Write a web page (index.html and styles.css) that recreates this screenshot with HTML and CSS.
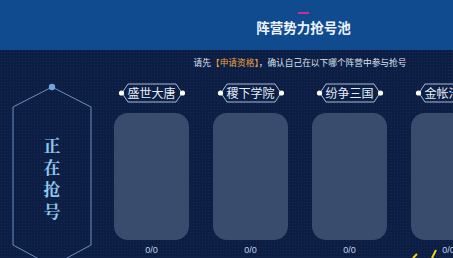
FILE: index.html
```html
<!DOCTYPE html>
<html>
<head>
<meta charset="UTF-8">
<title>阵营势力抢号池</title>
<link rel="stylesheet" href="styles.css">
</head>
<body>
<div class="page">
  <div class="banner">
    <div class="banner-line"></div>
    <div class="banner-title">阵营势力抢号池</div>
  </div>

  <div class="notice">请先<span class="notice-hl">【申请资格】</span>，确认自己在以下哪个阵营中参与抢号</div>

  <div class="main">
    <div class="status">
      <svg class="status-frame" width="80" height="190" viewBox="0 0 80 190">
        <polyline points="40,4 1,24 1,162 40,183" fill="none" stroke="#6f8fbf" stroke-width="1"/>
        <polyline points="40,4 79,24 79,162 40,183" fill="none" stroke="#6f8fbf" stroke-width="1"/>
        <circle cx="40" cy="4" r="3.2" fill="#6fa6dd"/>
      </svg>
      <div class="status-text">正在抢号</div>
    </div>

    <div class="camps">
      <div class="camp">
        <div class="camp-tag">
          <svg class="tag-frame" width="68" height="20" viewBox="0 0 68 20">
            <polygon points="4,10 10,1 58,1 64,10 58,19 10,19" fill="none" stroke="#a9bcd9" stroke-width="1"/>
            <circle cx="3.5" cy="10" r="2.6" fill="#fff"/>
            <circle cx="64.5" cy="10" r="2.6" fill="#fff"/>
          </svg>
          <span class="tag-name">盛世大唐</span>
        </div>
        <div class="camp-card"></div>
        <div class="camp-count">0/0</div>
      </div>
      <div class="camp">
        <div class="camp-tag">
          <svg class="tag-frame" width="68" height="20" viewBox="0 0 68 20">
            <polygon points="4,10 10,1 58,1 64,10 58,19 10,19" fill="none" stroke="#a9bcd9" stroke-width="1"/>
            <circle cx="3.5" cy="10" r="2.6" fill="#fff"/>
            <circle cx="64.5" cy="10" r="2.6" fill="#fff"/>
          </svg>
          <span class="tag-name">稷下学院</span>
        </div>
        <div class="camp-card"></div>
        <div class="camp-count">0/0</div>
      </div>
      <div class="camp">
        <div class="camp-tag">
          <svg class="tag-frame" width="68" height="20" viewBox="0 0 68 20">
            <polygon points="4,10 10,1 58,1 64,10 58,19 10,19" fill="none" stroke="#a9bcd9" stroke-width="1"/>
            <circle cx="3.5" cy="10" r="2.6" fill="#fff"/>
            <circle cx="64.5" cy="10" r="2.6" fill="#fff"/>
          </svg>
          <span class="tag-name">纷争三国</span>
        </div>
        <div class="camp-card"></div>
        <div class="camp-count">0/0</div>
      </div>
      <div class="camp">
        <div class="camp-tag">
          <svg class="tag-frame" width="68" height="20" viewBox="0 0 68 20">
            <polygon points="4,10 10,1 58,1 64,10 58,19 10,19" fill="none" stroke="#a9bcd9" stroke-width="1"/>
            <circle cx="3.5" cy="10" r="2.6" fill="#fff"/>
            <circle cx="64.5" cy="10" r="2.6" fill="#fff"/>
          </svg>
          <span class="tag-name">金帐汗国</span>
        </div>
        <div class="camp-card"></div>
        <div class="camp-count">0/0</div>
      </div>
    </div>
  </div>

  <svg class="spark" width="30" height="12" viewBox="0 0 30 12">
    <line x1="2" y1="12" x2="6" y2="8" stroke="#f2d21c" stroke-width="2"/>
    <line x1="21" y1="12" x2="25" y2="4" stroke="#f2d21c" stroke-width="2"/>
  </svg>
</div>
</body>
</html>
```

FILE: styles.css
```css
html, body {
  margin: 0;
  padding: 0;
}
body {
  width: 453px;
  height: 258px;
  overflow: hidden;
  background: #0b1c41;
  font-family: "Noto Sans CJK SC", "Liberation Sans", sans-serif;
}
.page {
  position: relative;
  width: 453px;
  height: 258px;
  overflow: hidden;
  background-color: #0c1e44;
  background-image: radial-gradient(rgba(120, 150, 200, 0.10) 0.7px, transparent 1px);
  background-size: 3px 3px;
}

/* banner */
.banner {
  height: 50px;
  background: #0f4b8e;
  padding-left: 154px;
  text-align: center;
  box-sizing: border-box;
  padding-top: 12px;
}
.banner-line {
  width: 11px;
  height: 2px;
  margin: 0 auto;
  background: #c8308f;
}
.banner-title {
  margin-top: 4px;
  font-size: 13.5px;
  line-height: 18px;
  font-weight: bold;
  color: #eef3fb;
}

/* notice */
.notice {
  padding-left: 147px;
  padding-top: 8px;
  height: 10px;
  line-height: 10px;
  font-size: 8.7px;
  text-align: center;
  color: #dce4f1;
  white-space: nowrap;
}
.notice-hl {
  color: #e9a23b;
}

/* main area */
.main {
  display: flex;
  padding-left: 12px;
  margin-top: 15px;
}
.status {
  position: relative;
  width: 80px;
  height: 190px;
  margin-right: 22px;
  flex-shrink: 0;
}
.status-frame {
  position: absolute;
  left: 0;
  top: 0;
}
.status-text {
  position: relative;
  width: 18px;
  margin: 0 auto;
  padding-top: 51px;
  font-family: "Noto Serif CJK SC", "Noto Sans CJK SC", serif;
  font-weight: bold;
  font-size: 17px;
  line-height: 22px;
  color: #8fc6ee;
  text-align: center;
}

.camps {
  display: flex;
  gap: 24px;
}
.camp {
  width: 75px;
  flex-shrink: 0;
  display: flex;
  flex-direction: column;
  align-items: center;
}
.camp-tag {
  position: relative;
  width: 68px;
  height: 20px;
  display: flex;
  align-items: center;
  justify-content: center;
}
.tag-frame {
  position: absolute;
  left: 0;
  top: 0;
}
.tag-name {
  position: relative;
  font-size: 12px;
  line-height: 20px;
  color: #e6edf8;
  white-space: nowrap;
}
.camp-card {
  width: 75px;
  height: 127px;
  margin-top: 10px;
  border-radius: 14px;
  background: #394c6e;
}
.camp-count {
  margin-top: 5px;
  font-family: "Liberation Sans", sans-serif;
  font-size: 9px;
  line-height: 10px;
  color: #c3d0e4;
}

.spark {
  position: absolute;
  left: 411px;
  top: 246px;
}
```
